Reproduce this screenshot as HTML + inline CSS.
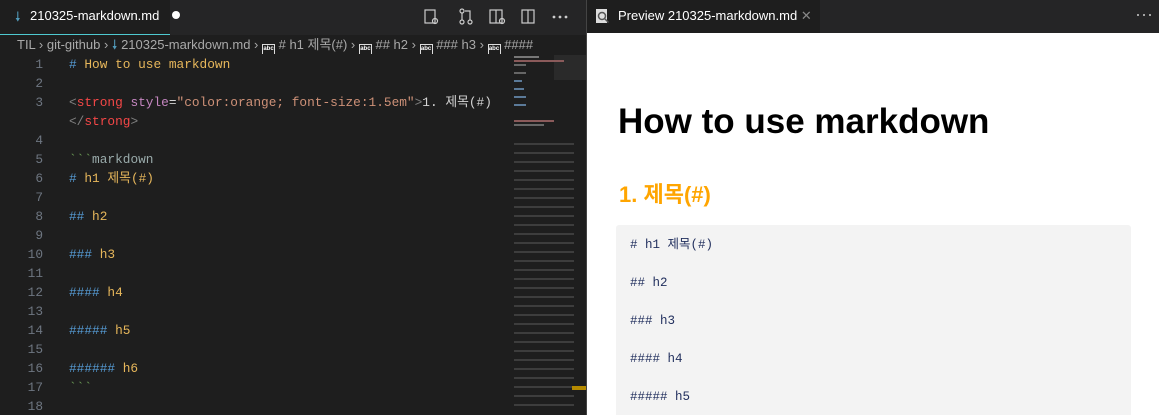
<!DOCTYPE html>
<html style="width:1159px;height:415px;overflow:hidden"><head><meta charset="utf-8"><style>
*{margin:0;padding:0;box-sizing:border-box}
body{width:1159px;height:415px;overflow:hidden;background:#1e1e1e;position:relative;font-family:"Liberation Sans","Noto Sans CJK KR",sans-serif}
.abs{position:absolute}
.mono{font-family:"Liberation Mono","Noto Sans CJK KR",monospace}
.code div{height:19px;line-height:19px;font-size:12.8px;white-space:pre}
.ln div{height:19px;line-height:19px;font-size:12.8px;text-align:right;color:#6e7681}
.b{color:#569cd6}.y{color:#e7b75b}.g{color:#808080}.r{color:#f44747}.p{color:#c586c0}.s{color:#ce9178}.w{color:#d4d4d4}.o{color:#e5a54b}
.mm{position:absolute;height:2px}
.abc{display:inline-block;width:13px;height:11px;border:1px solid #ddd;font-size:6px;line-height:9px;text-align:center;color:#fff;vertical-align:-1px;font-weight:bold}
.pc div{height:38px;line-height:38px;font-size:12.5px;color:#1f2d5c;white-space:pre}
</style></head><body>
<div class="abs" style="left:0;top:0;width:586px;height:35px;background:#252526"></div>
<div class="abs" style="left:0;top:0;width:170px;height:35px;background:#1e1e1e;border-bottom:1px solid #4ec9d0"></div>
<div class="abs" style="left:15px;top:8px;color:#519aba;font-size:13px">&#129047;</div>
<div class="abs" style="left:30px;top:8px;color:#fff;font-size:13px">210325-markdown.md</div>
<div class="abs" style="left:172px;top:11px;width:8px;height:8px;border-radius:50%;background:#fff"></div>
<svg class="abs" style="left:420px;top:6px" width="160" height="22" fill="none" stroke="#ccc" stroke-width="1.2">
<rect x="5" y="4" width="10" height="13"/><circle cx="15" cy="15" r="2.5"/>
<circle cx="42" cy="5" r="2"/><circle cx="50" cy="16" r="2"/><circle cx="42" cy="16" r="2"/><path d="M42 7v7M45 5h5v9"/>
<rect x="70" y="4" width="12" height="13"/><path d="M76 4v13"/><circle cx="82" cy="15" r="2.5"/>
<rect x="102" y="4" width="12" height="13"/><path d="M108 4v13"/>
<circle cx="134" cy="11" r=".8" fill="#ccc"/><circle cx="140" cy="11" r=".8" fill="#ccc"/><circle cx="146" cy="11" r=".8" fill="#ccc"/>
</svg>
<div class="abs" style="left:17px;top:36px;height:18px;line-height:18px;color:#a9a9a9;font-size:13px;white-space:nowrap;width:569px;overflow:hidden">TIL &#8250; git-github &#8250; <span style="color:#519aba">&#129047;</span> 210325-markdown.md &#8250; <span class="abc">abc</span> # h1 제목(#) &#8250; <span class="abc">abc</span> ## h2 &#8250; <span class="abc">abc</span> ### h3 &#8250; <span class="abc">abc</span> ####</div>
<div class="abs ln mono" style="left:0;top:55px;width:43px">
<div>1</div><div>2</div><div>3</div><div></div><div>4</div><div>5</div><div>6</div><div>7</div><div>8</div><div>9</div><div>10</div><div>11</div><div>12</div><div>13</div><div>14</div><div>15</div><div>16</div><div>17</div><div>18</div></div>
<div class="abs code mono" style="left:69px;top:55px">
<div><span class="b">#</span><span class="y"> How to use markdown</span></div>
<div></div>
<div><span class="g">&lt;</span><span class="r">strong</span> <span class="p">style</span><span class="w">=</span><span class="s">"color:orange; font-size:1.5em"</span><span class="g">&gt;</span><span class="w">1. 제목(#)</span></div>
<div><span class="g">&lt;/</span><span class="r">strong</span><span class="g">&gt;</span></div>
<div></div>
<div><span style="color:#6a9955">&#96;&#96;&#96;</span><span style="color:#9aa">markdown</span></div>
<div><span class="b">#</span><span class="y"> h1 제목(#)</span></div>
<div></div>
<div><span class="b">##</span><span class="y"> h2</span></div>
<div></div>
<div><span class="b">###</span><span class="y"> h3</span></div>
<div></div>
<div><span class="b">####</span><span class="y"> h4</span></div>
<div></div>
<div><span class="b">#####</span><span class="y"> h5</span></div>
<div></div>
<div><span class="b">######</span><span class="y"> h6</span></div>
<div><span style="color:#6a9955">&#96;&#96;&#96;</span></div>
</div>
<div class="abs" style="left:554px;top:55px;width:32px;height:25px;background:#2a2a2a"></div>
<div class="mm" style="left:514px;top:56px;width:25px;background:#777"></div>
<div class="mm" style="left:514px;top:60px;width:50px;background:#8a5a5a"></div>
<div class="mm" style="left:514px;top:64px;width:12px;background:#666"></div>
<div class="mm" style="left:514px;top:72px;width:12px;background:#666"></div>
<div class="mm" style="left:514px;top:80px;width:8px;background:#5b7a99"></div>
<div class="mm" style="left:514px;top:88px;width:10px;background:#5b7a99"></div>
<div class="mm" style="left:514px;top:96px;width:12px;background:#5b7a99"></div>
<div class="mm" style="left:514px;top:104px;width:12px;background:#5b7a99"></div>
<div class="mm" style="left:514px;top:120px;width:40px;background:#8a5a5a"></div>
<div class="mm" style="left:514px;top:124px;width:30px;background:#666"></div>
<div class="abs" style="left:514px;top:140px;width:60px;height:270px;background:repeating-linear-gradient(#1e1e1e 0 3px,#4a4a4a 3px 5px,#1e1e1e 5px 9px);opacity:.7"></div>
<div class="abs" style="left:572px;top:386px;width:14px;height:4px;background:#b58a00"></div>
<div class="abs" style="left:586px;top:0;width:1px;height:415px;background:#444"></div>
<div class="abs" style="left:587px;top:0;width:572px;height:33px;background:#252526"></div>
<div class="abs" style="left:587px;top:0;width:233px;height:33px;background:#1e1e1e"></div>
<svg class="abs" style="left:595px;top:8px" width="16" height="17"><rect x="1" y="1" width="11" height="14" fill="#ddd"/><circle cx="7" cy="8" r="3.5" fill="none" stroke="#555" stroke-width="1.5"/><path d="M9.5 10.5l4 4" stroke="#555" stroke-width="1.5"/></svg>
<div class="abs" style="left:618px;top:8px;color:#fff;font-size:13px">Preview 210325-markdown.md <span style="color:#888">✕</span></div>
<svg class="abs" style="left:1135px;top:10px" width="20" height="10"><circle cx="3" cy="5" r="1" fill="#ccc"/><circle cx="9" cy="5" r="1" fill="#ccc"/><circle cx="15" cy="5" r="1" fill="#ccc"/></svg>
<div class="abs" style="left:587px;top:33px;width:572px;height:382px;background:#fff"></div>
<div class="abs" style="left:618px;top:102px;font-size:35px;font-weight:bold;color:#000">How to use markdown</div>
<div class="abs" style="left:619px;top:177px;font-size:22px;font-weight:bold;color:#ffa500">1. 제목(#)</div>
<div class="abs" style="left:616px;top:225px;width:515px;height:190px;background:#f3f3f3;border-radius:3px 3px 0 0;overflow:hidden">
<div class="pc mono" style="position:absolute;left:14px;top:1px">
<div># h1 제목(#)</div><div>## h2</div><div>### h3</div><div>#### h4</div><div>##### h5</div></div></div>
</body></html>
